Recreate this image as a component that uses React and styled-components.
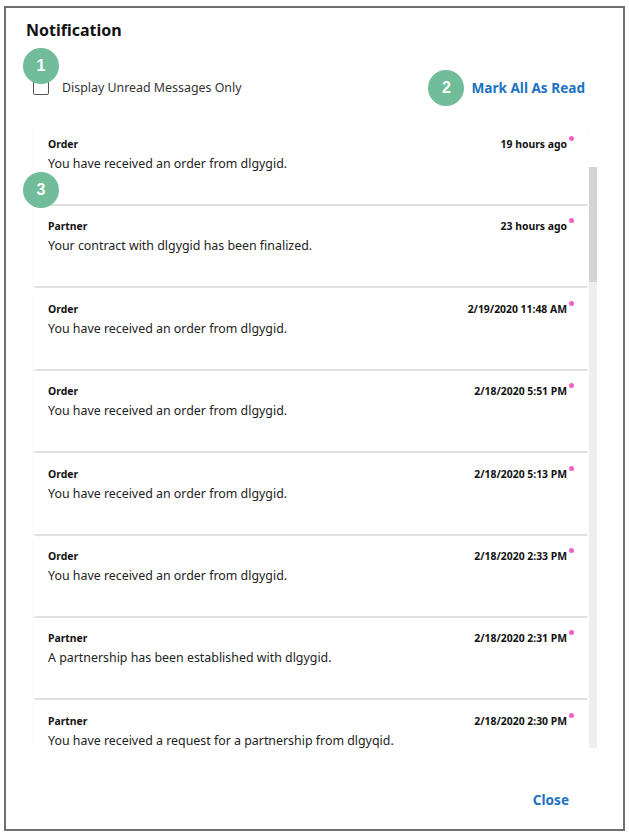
import React from "react";
import styled, { createGlobalStyle } from "styled-components";

const GlobalStyle = createGlobalStyle`
  body {
    margin: 0;
    background: #fff;
    font-family: "Noto Sans", "Open Sans", sans-serif;
  }
`;

const Modal = styled.div`
  box-sizing: border-box;
  width: 621px;
  height: 825px;
  margin: 6px 4px 0 4px;
  border: 2px solid #707070;
  display: flex;
  flex-direction: column;
  background: #fff;
`;

const Title = styled.h2`
  margin: 11px 0 0 20px;
  font-size: 16px;
  line-height: 22px;
  font-weight: 700;
  color: #111;
`;

const Toolbar = styled.div`
  display: flex;
  align-items: center;
  justify-content: space-between;
  height: 34px;
  margin: 29px 38px 0 27px;
`;

const CheckLabel = styled.label`
  position: relative;
  display: flex;
  align-items: center;
  gap: 13px;
  font-size: 12.4px;
  color: #333;
  cursor: pointer;
`;

const CheckBox = styled.span`
  box-sizing: border-box;
  width: 16px;
  height: 16px;
  border: 1.5px solid #555;
  border-radius: 2px;
  background: #fff;
`;

const LinkButton = styled.button`
  position: relative;
  border: 0;
  background: none;
  padding: 0;
  font-family: inherit;
  font-size: 13.6px;
  font-weight: 700;
  color: #1b72c4;
  cursor: pointer;
`;

const Badge = styled.span`
  position: absolute;
  left: ${(p) => p.$left}px;
  top: ${(p) => p.$top}px;
  width: 36px;
  height: 36px;
  border-radius: 50%;
  background: #71bc99;
  color: #fff;
  font-family: "Liberation Sans", Arial, sans-serif;
  font-size: 16px;
  font-weight: 700;
  display: flex;
  align-items: center;
  justify-content: center;
  z-index: 2;
`;

const ListWrap = styled.div`
  position: relative;
  display: flex;
  height: 622px;
  margin: 22px 26px 0 27px;
`;

const List = styled.div`
  flex: 1;
  overflow: hidden;
  padding: 1px 1px 0 1px;
  margin-left: -1px;
`;

const ScrollTrack = styled.div`
  width: 8px;
  margin-top: 41px;
  background: #eeeef0;
`;

const ScrollThumb = styled.div`
  height: 115px;
  background: #d3d3d7;
`;

const Card = styled.div`
  box-sizing: border-box;
  height: 77px;
  margin-bottom: 5.4px;
  padding: 10px 21px 0 15px;
  background: #fff;
  box-shadow: 0 1.5px 1px rgba(0, 0, 0, 0.12), 0 0 1px rgba(0, 0, 0, 0.05);
`;

const CardHead = styled.div`
  display: flex;
  justify-content: space-between;
  align-items: center;
  font-size: 10.4px;
  line-height: 14px;
  font-weight: 700;
  color: #111;
`;

const Time = styled.span`
  position: relative;
`;

const Dot = styled.span`
  position: absolute;
  right: -7px;
  top: -1px;
  width: 5px;
  height: 5px;
  border-radius: 50%;
  background: #f25fc6;
`;

const Message = styled.div`
  margin-top: 4px;
  font-size: 12.4px;
  line-height: 18px;
  color: #222;
`;

const Footer = styled.div`
  display: flex;
  justify-content: flex-end;
  margin: 42px 54px 0 0;
`;

const notifications = [
  ["Order", "You have received an order from dlgygid.", "19 hours ago"],
  ["Partner", "Your contract with dlgygid has been finalized.", "23 hours ago"],
  ["Order", "You have received an order from dlgygid.", "2/19/2020 11:48 AM"],
  ["Order", "You have received an order from dlgygid.", "2/18/2020 5:51 PM"],
  ["Order", "You have received an order from dlgygid.", "2/18/2020 5:13 PM"],
  ["Order", "You have received an order from dlgygid.", "2/18/2020 2:33 PM"],
  ["Partner", "A partnership has been established with dlgygid.", "2/18/2020 2:31 PM"],
  ["Partner", "You have received a request for a partnership from dlgyqid.", "2/18/2020 2:30 PM"],
];

export default function App() {
  return (
    <>
      <GlobalStyle />
      <Modal>
        <Title>Notification</Title>
        <Toolbar>
          <CheckLabel>
            <Badge $left={-10} $top={-31}>1</Badge>
            <CheckBox />
            Display Unread Messages Only
          </CheckLabel>
          <LinkButton>
            <Badge $left={-43} $top={-8}>2</Badge>
            Mark All As Read
          </LinkButton>
        </Toolbar>
        <ListWrap>
          <Badge $left={-10} $top={46}>3</Badge>
          <List>
            {notifications.map(([kind, text, time], i) => (
              <Card key={i}>
                <CardHead>
                  <span>{kind}</span>
                  <Time>
                    {time}
                    <Dot />
                  </Time>
                </CardHead>
                <Message>{text}</Message>
              </Card>
            ))}
          </List>
          <ScrollTrack>
            <ScrollThumb />
          </ScrollTrack>
        </ListWrap>
        <Footer>
          <LinkButton>Close</LinkButton>
        </Footer>
      </Modal>
    </>
  );
}
